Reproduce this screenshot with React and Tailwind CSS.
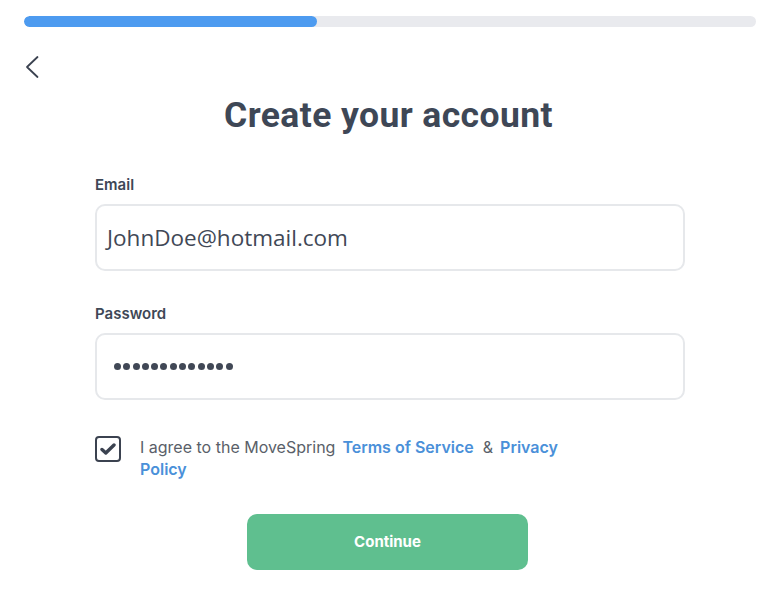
import React from 'react';

function BackChevron() {
  return (
    <svg width="16" height="24" viewBox="0 0 16 24" fill="none" stroke="#3b4250" strokeWidth="1.8" strokeLinecap="round" strokeLinejoin="round">
      <path d="M13.5 2 L3 12 L13.5 22" />
    </svg>
  );
}

function Check() {
  return (
    <svg width="16" height="12" viewBox="0 0 16 12" fill="none" stroke="#3b4250" strokeWidth="3.4" strokeLinecap="round" strokeLinejoin="round">
      <path d="M2 6.5 L5.8 10 L14 2" />
    </svg>
  );
}

const dots = Array.from({ length: 13 });

export default function App() {
  return (
    <div className="w-[777px] h-[598px] bg-white font-['Inter',sans-serif] text-[#3e4756]">
      <div className="pl-6 pr-[21px] pt-4">
        <div className="h-[11px] w-full rounded-full bg-[#e9eaee] overflow-hidden">
          <div className="h-full w-[293px] rounded-full bg-[#4d9bf0]" />
        </div>
        <div className="mt-[28px] h-6">
          <BackChevron />
        </div>
      </div>

      <h1 className="mt-[15px] text-center text-[35.5px] leading-[42px] font-bold font-['Roboto',sans-serif] text-[#3e4756] tracking-[0.4px]">
        Create your account
      </h1>

      <div className="ml-[95px] w-[590px] mt-[39px]">
        <label className="block text-[15px] leading-5 font-semibold text-[#3e4756]">Email</label>
        <div className="mt-[9px] h-[67px] rounded-[10px] border-2 border-[#e6e8eb] flex items-center px-[10px]">
          <span className="text-[22.5px] text-[#414856] font-['Open_Sans',sans-serif]">JohnDoe@hotmail.com</span>
        </div>

        <label className="block mt-[33px] text-[15px] leading-5 font-semibold text-[#3e4756]">Password</label>
        <div className="mt-[9px] h-[67px] rounded-[10px] border-2 border-[#e6e8eb] flex items-center gap-[2.3px] px-[17px]">
          {dots.map((_, i) => (
            <span key={i} className="w-[7px] h-[7px] rounded-full bg-[#414856]" />
          ))}
        </div>

        <div className="mt-[36px] flex items-start gap-[19px]">
          <div className="w-[26px] h-[26px] shrink-0 rounded-[4px] border-2 border-[#3b4250] flex items-center justify-center">
            <Check />
          </div>
          <p className="w-[430px] text-[16px] leading-[22px] text-[#5a5f69]">
            I agree to the MoveSpring
            <span className="ml-[7px] font-semibold text-[#4a90d9]">Terms of Service</span>
            <span className="ml-[9px]">&amp;</span>
            <span className="ml-[7px] font-semibold text-[#4a90d9]">Privacy</span>{' '}
            <span className="font-semibold text-[#4a90d9]">Policy</span>
          </p>
        </div>

        <div className="mt-[34px] ml-[152px]">
          <button className="w-[281px] h-[56px] rounded-[10px] bg-[#5fbf8f] text-white text-[15px] font-bold">
            Continue
          </button>
        </div>
      </div>
    </div>
  );
}
